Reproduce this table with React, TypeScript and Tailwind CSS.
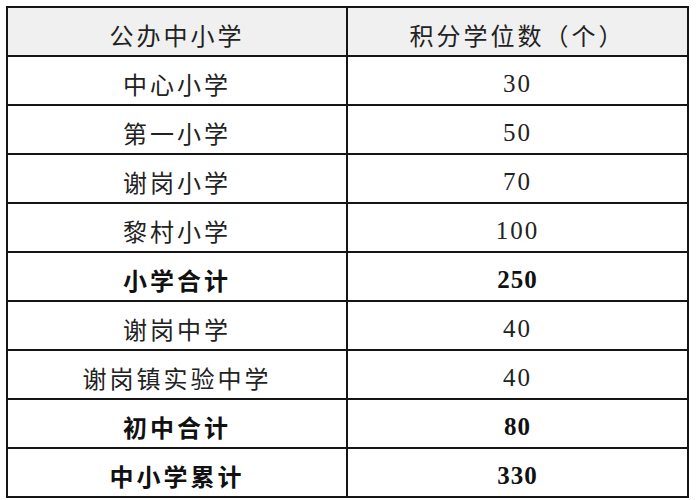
import React from "react";

const rows: { name: string; value: string; bold?: boolean }[] = [
  { name: "中心小学", value: "30" },
  { name: "第一小学", value: "50" },
  { name: "谢岗小学", value: "70" },
  { name: "黎村小学", value: "100" },
  { name: "小学合计", value: "250", bold: true },
  { name: "谢岗中学", value: "40" },
  { name: "谢岗镇实验中学", value: "40" },
  { name: "初中合计", value: "80", bold: true },
  { name: "中小学累计", value: "330", bold: true },
];

function NameCell({ text, bold, header }: { text: string; bold?: boolean; header?: boolean }) {
  return (
    <div
      className={
        "h-[49px] border-r-2 border-b-2 border-[#151515] flex items-center justify-center pt-[6px] text-[24px] tracking-[3px] font-['Noto_Sans_CJK_SC',sans-serif] " +
        (header ? "bg-[#f0f0f0] " : "bg-white ") +
        (bold ? "font-bold text-[#111]" : "font-normal text-[#222]")
      }
    >
      {text}
    </div>
  );
}

function NumCell({ text, bold }: { text: string; bold?: boolean }) {
  return (
    <div
      className={
        "h-[49px] border-r-2 border-b-2 border-[#151515] bg-white flex items-center justify-center pt-[6px] text-[25px] font-['Liberation_Serif','Noto_Sans_CJK_SC',serif] " +
        (bold ? "font-bold text-[#111] tracking-[1px]" : "font-normal text-[#222] tracking-[2px]")
      }
    >
      {text}
    </div>
  );
}

export default function App() {
  return (
    <div className="w-[696px] h-[500px] bg-white pl-[6px] pt-[6px]">
      <div className="w-[683px] border-t-2 border-l-2 border-[#151515] grid grid-cols-[340px_341px]">
        <NameCell text="公办中小学" header />
        <NameCell text="积分学位数（个）" header />
        {rows.map((r) => (
          <React.Fragment key={r.name}>
            <NameCell text={r.name} bold={r.bold} />
            <NumCell text={r.value} bold={r.bold} />
          </React.Fragment>
        ))}
      </div>
    </div>
  );
}
